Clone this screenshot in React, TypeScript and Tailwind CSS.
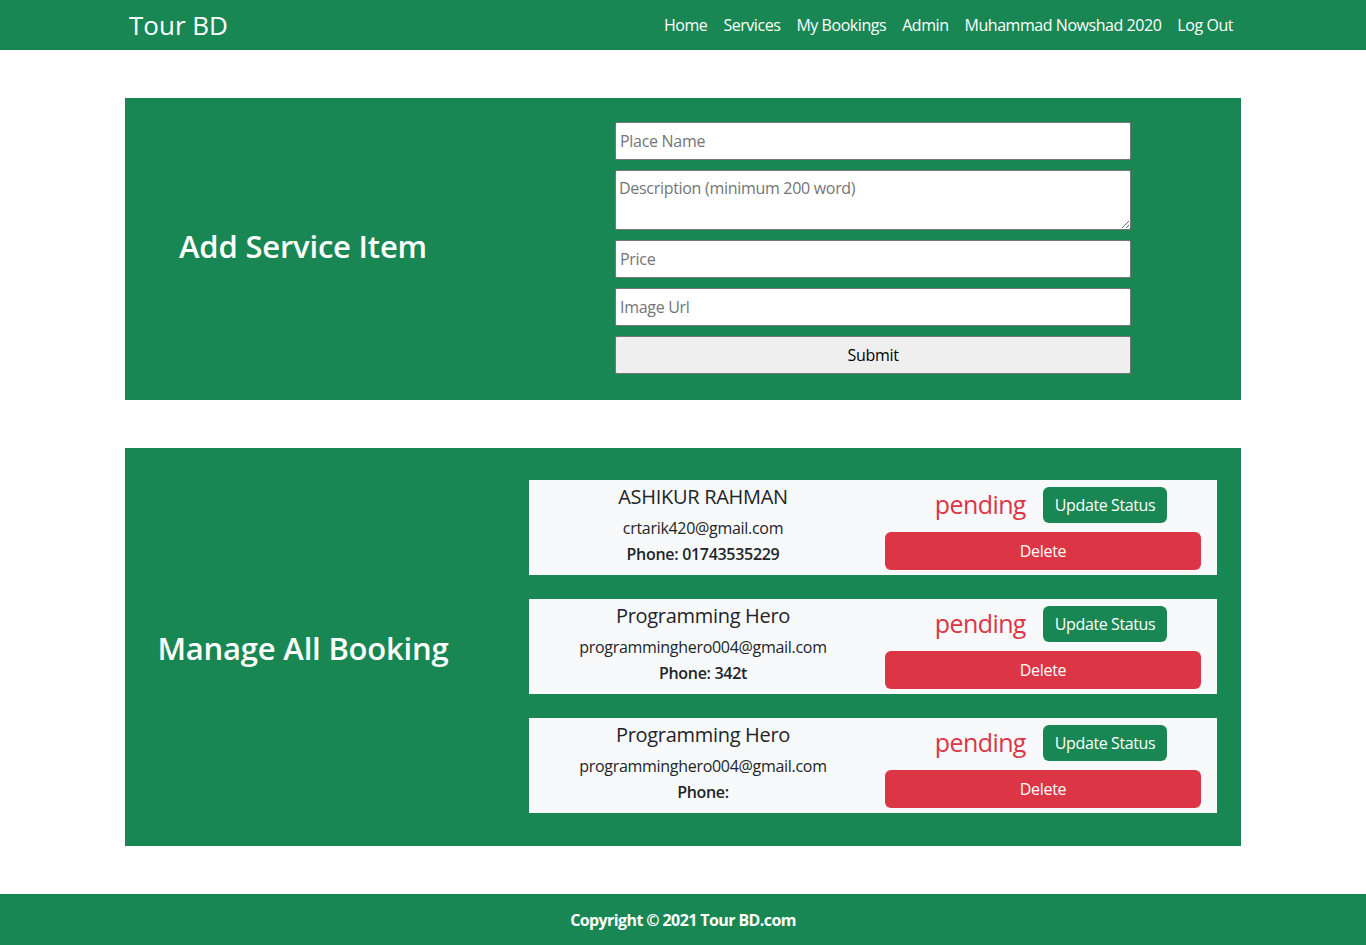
import React from "react";

type Booking = { name: string; email: string; phone: string };

const bookings: Booking[] = [
    { name: "ASHIKUR RAHMAN", email: "crtarik420@gmail.com", phone: "01743535229" },
    { name: "Programming Hero", email: "programminghero004@gmail.com", phone: "342t" },
    { name: "Programming Hero", email: "programminghero004@gmail.com", phone: "" },
];

const font = { fontFamily: '"Open Sans", "Noto Sans", sans-serif' };

function Header() {
    return (
        <nav className="bg-[#198754] h-[50px]">
            <div className="w-[1116px] mx-auto h-full flex items-center justify-between">
                <a className="text-white text-[26px] pl-[4px] leading-none">Tour BD</a>
                <div className="flex text-white text-[16px] tracking-[-0.45px]">
                    {["Home", "Services", "My Bookings", "Admin", "Muhammad Nowshad 2020", "Log Out"].map((l) => (
                        <a key={l} className="px-[8px]">{l}</a>
                    ))}
                </div>
            </div>
        </nav>
    );
}

function AddService() {
    const inputCls = "w-full h-[38px] bg-white border border-[#767676] rounded-[2px] px-[4px] text-[16px] tracking-[-0.3px] placeholder:text-[#757575] outline-none";
    return (
        <section className="w-[1116px] mx-auto mt-[48px] bg-[#198754] flex items-center pt-[24px] pb-[26px]">
            <div className="w-[356px] flex justify-center pb-[4px]">
                <h2 className="text-white text-[31px] font-semibold tracking-[-0.2px]">Add Service Item</h2>
            </div>
            <form className="w-[516px] ml-[134px] flex flex-col gap-[10px]" onSubmit={(e) => e.preventDefault()}>
                <input className={inputCls} placeholder="Place Name" style={font} />
                <textarea className="w-full h-[60px] bg-white border border-[#767676] rounded-[2px] px-[3px] py-[5px] text-[16px] tracking-[-0.3px] placeholder:text-[#757575] outline-none" placeholder="Description (minimum 200 word)" style={font} />
                <input className={inputCls} placeholder="Price" style={font} />
                <input className={inputCls} placeholder="Image Url" style={font} />
                <button className="w-full h-[38px] bg-[#efefef] border border-[#767676] rounded-[2px] text-[16px] tracking-[-0.3px] text-black" style={font}>Submit</button>
            </form>
        </section>
    );
}

function BookingCard({ b }: { b: Booking }) {
    return (
        <div className="bg-[#f8f9fa] h-[95px] flex">
            <div className="w-1/2 flex flex-col items-center pt-[3px] pl-[4px] text-[#212529] tracking-[-0.3px]">
                <h4 className="text-[20px] font-medium leading-[28px]">{b.name}</h4>
                <p className="text-[16px] leading-[24px] mt-[5px]">{b.email}</p>
                <p className="text-[16px] font-semibold leading-[24px] mt-[2px]">Phone: {b.phone}</p>
            </div>
            <div className="w-1/2 pl-[12px] pr-[16px] pt-[7px] flex flex-col">
                <div className="flex items-center justify-center pl-[16px] gap-[17px]">
                    <span className="text-[#dc3545] text-[25px] leading-none pb-[2px] tracking-[-0.6px]">pending</span>
                    <button className="bg-[#198754] text-white text-[16px] h-[36px] px-[12px] rounded-[6px] tracking-[-0.4px]">Update Status</button>
                </div>
                <button className="mt-[9px] bg-[#dc3545] text-white text-[16px] h-[38px] w-full rounded-[6px] tracking-[-0.3px]">Delete</button>
            </div>
        </div>
    );
}

function ManageBookings() {
    return (
        <section className="w-[1116px] mx-auto mt-[48px] bg-[#198754] flex items-center pt-[32px] pb-[33px]">
            <div className="w-[356px] flex justify-center pt-[4px]">
                <h2 className="text-white text-[31px] font-semibold tracking-[-0.2px]">Manage All Booking</h2>
            </div>
            <div className="w-[688px] ml-[48px] flex flex-col gap-[24px]">
                {bookings.map((b, i) => (
                    <BookingCard key={i} b={b} />
                ))}
            </div>
        </section>
    );
}

export default function App() {
    return (
        <div className="min-h-[945px] bg-white flex flex-col" style={font}>
            <Header />
            <AddService />
            <ManageBookings />
            <footer className="mt-[48px] bg-[#198754] h-[51px] flex items-center justify-center">
                <p className="text-white text-[16px] font-bold tracking-[-0.6px]">Copyright © 2021 Tour BD.com</p>
            </footer>
        </div>
    );
}
